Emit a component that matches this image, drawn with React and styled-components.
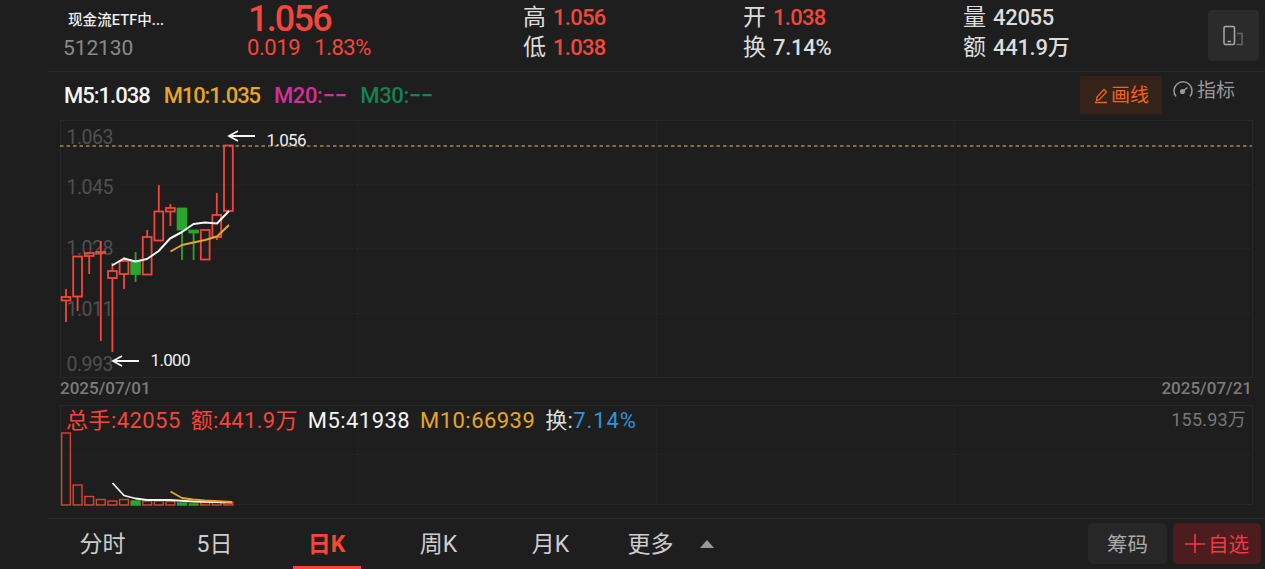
import React from 'react';
import styled, { createGlobalStyle } from 'styled-components';

const GlobalStyle = createGlobalStyle`
  * {
    box-sizing: border-box;
  }
  body {
    margin: 0;
    background: #1e1e1e;
    overflow: hidden;
  }
`;
const Page = styled.div`
  width: 1265px;
  height: 569px;
  display: flex;
  flex-direction: column;
  background: #1e1e1e;
  color: #dcdcdc;
  font-family: Roboto, 'Noto Sans CJK SC', sans-serif;
  white-space: nowrap;
  > * {
    flex-shrink: 0;
  }
`;
const Text = styled.span`
  display: inline-block;
  color: ${(p) => p.$color || 'inherit'};
  font-size: ${(p) => p.$size || 22}px;
  font-weight: ${(p) => p.$weight || 400};
  letter-spacing: ${(p) => p.$spacing || 0}px;
  line-height: 30px;
`;

const Header = styled.header`
  height: 72px;
  margin-left: 48px;
  border-bottom: 1px solid #2b2b2b;
  display: grid;
  grid-template-columns: 199px 276px 220px 220px 245px 52px;
`;
const NameBox = styled.div`
  display: flex;
  flex-direction: column;
  padding: 6px 0 0 15px;
`;
const Name = styled(Text)`
  padding-left: 5px;
  height: 27px;
`;
const PriceBox = styled.div`
  display: flex;
  flex-direction: column;
`;
const Price = styled(Text)`
  height: 33px;
  line-height: 39px;
  padding-left: 1px;
`;
const Change = styled.div`
  display: flex;
  gap: 14px;
`;
const Quote = styled.div`
  display: flex;
  flex-direction: column;
  padding-top: 3px;
`;
const QuoteRow = styled.div`
  display: flex;
  gap: 7px;
  height: 30px;
`;
const RotateButton = styled.button`
  width: 51px;
  height: 51px;
  margin-top: 10px;
  padding: 0;
  border: 0;
  border-radius: 4px;
  background: #2b2b2b;
`;

const Toolbar = styled.div`
  height: 48px;
  display: flex;
  padding: 0 30px 0 64px;
`;
const Averages = styled.div`
  flex: 1;
  display: flex;
  gap: 14px;
  padding-top: 9px;
`;
const DrawButton = styled.div`
  width: 82px;
  height: 38px;
  margin-top: 4px;
  padding: 2px 0 0 1px;
  display: flex;
  align-items: center;
  justify-content: center;
  gap: 2px;
  background: #352319;
  color: #f0641e;
  border-radius: 2px;
`;
const Indicator = styled.div`
  display: flex;
  gap: 4px;
  padding: 4px 0 0 11px;
  color: #999;
  svg {
    margin-top: 5px;
  }
`;

const Chart = styled.svg`
  display: block;
  flex: none;
  font-family: Roboto, 'Noto Sans CJK SC', sans-serif;
`;
const Dates = styled.div`
  height: 27px;
  padding: 0 13px 0 60px;
  display: flex;
  justify-content: space-between;
  color: #7c7c7c;
  span {
    line-height: 21px;
  }
`;
const VolumePanel = styled.div`
  height: 113px;
  display: grid;
  > * {
    grid-area: 1 / 1;
  }
`;
const VolumeInfo = styled.div`
  display: flex;
  gap: 10px;
  padding: 1px 19px 0 66px;
`;
const VolumeMax = styled(Text)`
  margin-left: auto;
  line-height: 28px;
`;

const Tabs = styled.nav`
  height: 51px;
  margin-left: 47px;
  border-top: 1px solid #2b2b2b;
  display: flex;
  padding-right: 4px;
`;
const Tab = styled.div`
  width: 112px;
  display: flex;
  justify-content: center;
  color: ${(p) => (p.$active ? '#fb4535' : '#cdcdcd')};
  font-weight: ${(p) => (p.$active ? 700 : 400)};
  font-size: 23px;
  line-height: 52px;
`;
const TabLabel = styled.span`
  height: 50px;
  padding: 0 16px 0 15px;
  border-bottom: ${(p) => (p.$active ? '3px solid #fb4535' : 'none')};
`;
const MoreArrow = styled.span`
  align-self: flex-start;
  margin: 21px 0 0 10px;
  border: 7px solid transparent;
  border-top: 0;
  border-bottom: 8px solid #999;
`;
const Action = styled.div`
  width: ${(p) => p.$width}px;
  height: 41px;
  margin: 4px 0 0 6px;
  padding-bottom: 2px;
  border-radius: 5px;
  display: flex;
  align-items: center;
  justify-content: center;
  gap: 3px;
  font-size: 20.5px;
  background: ${(p) => (p.$primary ? '#4d1c1f' : '#272727')};
  color: ${(p) => (p.$primary ? '#fa3442' : '#aaa')};
`;
const Spacer = styled.div`
  flex: 1;
`;

const RED = '#f4463a';
const GREEN = '#2ca52f';
const WHITE = '#f5f5f5';
const YELLOW = '#e8a526';

// high, body top, body bottom, low
const candles = [
  [289, 297, 300.5, 322],
  [256, 256.5, 296.5, 311],
  [252, 253, 256, 274],
  [241, 252, 253, 341],
  [263, 271, 278, 352],
  [257, 261, 274, 289],
  [252, 261, 274, 282, true],
  [230, 237, 274.5, 274],
  [185, 211.5, 240.5, 240],
  [204, 208, 211.5, 226],
  [208, 208.5, 229.5, 260, true],
  [230, 230.5, 232.5, 260, true],
  [230, 230, 259.5, 259],
  [193, 215, 237, 240],
  [146, 145.5, 211, 211],
];
const volumes = [72, 20, 8.5, 5.5, 4, 5.5, 4, 4, 4, 3.5, 2, 1, 2.5, 3, 3];
const centerX = (i) => 66 + i * 11.6;

const quotes = [
  [['高', '1.056', RED, -0.7], ['低', '1.038', RED, -0.7]],
  [['开', '1.038', RED, -0.7], ['换', '7.14%', null, -0.3]],
  [['量', '42055', null, -0.3], ['额', '441.9万', null, -0.3]],
];
const priceLabels = [
  ['1.063', 144],
  ['1.045', 194],
  ['1.028', 255],
  ['1.011', 316],
  ['0.993', 371],
];

const Grid = ({ top, bottom, rows }) => (
  <g fill="none" stroke="#282828">
    <rect x="60.5" y={top} width="1192" height={bottom - top} />
    <g stroke="#262626" strokeDasharray="2 2">
      {[358.5, 656.5, 954.5].map((x) => (
        <path key={x} d={`M${x} ${top}V${bottom}`} />
      ))}
      {rows.map((y) => (
        <path key={y} d={`M60 ${y}H1252`} />
      ))}
    </g>
  </g>
);

const PriceChart = () => (
  <Chart width="1265" height="258" viewBox="0 120 1265 258">
    <Grid top={120.5} bottom={377.5} rows={[184.5, 248.5, 313.5]} />
    <g fill="#505050" fontSize="19.5">
      {priceLabels.map(([label, y]) => (
        <text key={label} x="66.5" y={y} textLength="47">
          {label}
        </text>
      ))}
    </g>
    <path d="M60 146H1252" stroke="#a28a42" strokeWidth="1.3" strokeDasharray="3.5 3" />
    {candles.map(([high, top, bottom, low, down], i) => (
      <g key={i} stroke={down ? GREEN : RED} strokeWidth="1.8">
        <path d={`M${centerX(i)} ${high}V${top}M${centerX(i)} ${bottom}V${low}`} />
        <rect
          x={centerX(i) - 4.4}
          y={top}
          width="8.8"
          height={bottom - top}
          fill={down ? GREEN : 'none'}
        />
      </g>
    ))}
    <g fill="none" strokeWidth="2" strokeLinejoin="round">
      <path
        d="M112 265.5L124 258.5L135.5 261.5L147 259L158.7 251L170 238.5L182 232L193.5 224L205 222.5L217 223.5L229 211"
        stroke={WHITE}
      />
      <path d="M170.5 251.5L182 245L193.5 242.5L205 240L217 236.5L229 225" stroke={YELLOW} />
    </g>
    <g fill="none" stroke={WHITE} strokeWidth="1.8">
      <path d="M255 136H229M238 131L229 136L238 141" />
      <path d="M139 361H113M122 356L113 361L122 366" />
    </g>
    <g fill="#eee" fontSize="17">
      <text x="266.5" y="146" textLength="40">1.056</text>
      <text x="150.5" y="366" textLength="40">1.000</text>
    </g>
  </Chart>
);

const VolumeChart = () => (
  <Chart width="1265" height="101" viewBox="0 405 1265 101">
    <Grid top={405.5} bottom={504.5} rows={[454.5]} />
    {volumes.map((v, i) => {
      const down = candles[i][4];
      return (
        <rect
          key={i}
          x={centerX(i) - 4.4}
          y={505 - v}
          width="8.8"
          height={v}
          fill={down ? GREEN : 'none'}
          stroke={down ? GREEN : '#d84338'}
          strokeWidth="1.4"
        />
      );
    })}
    <g fill="none" strokeWidth="1.8" strokeLinejoin="round">
      <path d="M112.5 483L124 495.5L135.5 498.5L147 500L170 500L193 501.5L232 502.5" stroke={WHITE} />
      <path d="M170.5 491.5L182 498L193 499.5L205 500.5L232 502" stroke={YELLOW} />
    </g>
  </Chart>
);

const App = () => (
  <>
    <GlobalStyle />
    <Page>
      <Header>
        <NameBox>
          <Name $size={14.5} $weight={500} $spacing={0.1} $color="#eee">现金流ETF中...</Name>
          <Text $size={21} $spacing={-0.1} $color="#8a8a8a">512130</Text>
        </NameBox>
        <PriceBox>
          <Price $size={36} $weight={500} $spacing={-1.8} $color={RED}>1.056</Price>
          <Change>
            <Text $spacing={-0.4} $color={RED}>0.019</Text>
            <Text $spacing={-0.5} $color={RED}>1.83%</Text>
          </Change>
        </PriceBox>
        {quotes.map((rows, i) => (
          <Quote key={i}>
            {rows.map(([label, value, color, spacing]) => (
              <QuoteRow key={label}>
                <Text $size={23}>{label}</Text>
                <Text $weight={500} $color={color} $spacing={spacing}>{value}</Text>
              </QuoteRow>
            ))}
          </Quote>
        ))}
        <RotateButton>
          <svg width="51" height="51" fill="none" stroke="#aaa" strokeWidth="1.5">
            <rect x="16" y="16.5" width="10.5" height="18" rx="1.5" />
            <path d="M19.5 31.5H23" />
            <path d="M29 23.5H34V34.5H28.5" stroke="#666" />
          </svg>
        </RotateButton>
      </Header>

      <Toolbar>
        <Averages>
          <Text $weight={500} $spacing={-1} $color={WHITE}>M5:1.038</Text>
          <Text $weight={500} $spacing={-1.1} $color={YELLOW}>M10:1.035</Text>
          <Text $weight={500} $spacing={-0.4} $color="#d62e9b">M20:−−</Text>
          <Text $weight={500} $spacing={-0.4} $color="#178055">M30:−−</Text>
        </Averages>
        <DrawButton>
          <svg width="15" height="16" fill="none" stroke="currentColor" strokeWidth="1.3">
            <path d="M2.5 12.5L3 9L10 1.5L12.5 4L5.5 11.5ZM1 14.5H13" />
          </svg>
          <Text $size={19}>画线</Text>
        </DrawButton>
        <Indicator>
          <svg width="20" height="18" fill="none" stroke="currentColor" strokeWidth="1.5">
            <path d="M3 15.5A9 9 0 1 1 17 15.5M9.5 10.5L14.5 6.5" />
            <circle cx="9.5" cy="10.5" r="1.8" fill="currentColor" />
          </svg>
          <Text $size={19}>指标</Text>
        </Indicator>
      </Toolbar>

      <PriceChart />
      <Dates>
        <Text $size={17} $weight={500}>2025/07/01</Text>
        <Text $size={17} $weight={500}>2025/07/21</Text>
      </Dates>
      <VolumePanel>
        <VolumeChart />
        <VolumeInfo>
          <Text $spacing={0.45} $color={RED}>总手:42055</Text>
          <Text $spacing={0.3} $color={RED}>额:441.9万</Text>
          <Text $spacing={0.45} $color={WHITE}>M5:41938</Text>
          <Text $spacing={0.45} $color={YELLOW}>M10:66939</Text>
          <Text $spacing={0.4}>
            换:<Text $spacing={0.9} $color="#2d93dc">7.14%</Text>
          </Text>
          <VolumeMax $size={18} $spacing={0.2} $color="#777">155.93万</VolumeMax>
        </VolumeInfo>
      </VolumePanel>

      <Tabs>
        <Tab><TabLabel>分时</TabLabel></Tab>
        <Tab><TabLabel>5日</TabLabel></Tab>
        <Tab $active><TabLabel $active>日K</TabLabel></Tab>
        <Tab><TabLabel>周K</TabLabel></Tab>
        <Tab><TabLabel>月K</TabLabel></Tab>
        <Tab>
          <TabLabel>更多</TabLabel>
          <MoreArrow />
        </Tab>
        <Spacer />
        <Action $width={79}>筹码</Action>
        <Action $width={88} $primary>
          <svg width="20" height="20" stroke="currentColor" strokeWidth="1.6">
            <path d="M0 11H20M10 1V20" />
          </svg>
          自选
        </Action>
      </Tabs>
    </Page>
  </>
);

export default App;
